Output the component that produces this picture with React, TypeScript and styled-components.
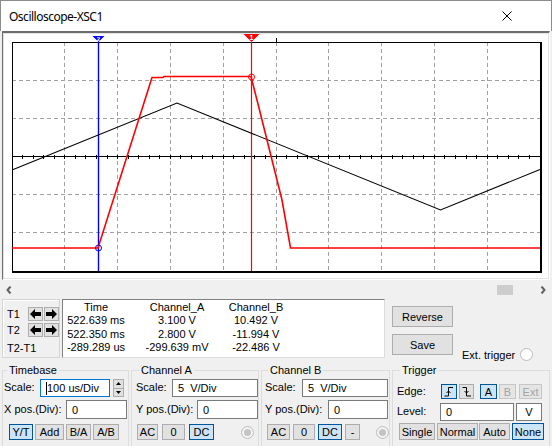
import React from 'react'
import styled, { createGlobalStyle } from 'styled-components'

const GlobalStyle = createGlobalStyle`
  html, body {
    margin: 0;
    padding: 0;
    background: #f0f0f0;
    overflow: hidden;
  }
  body {
    font-family: "Liberation Sans", Arial, sans-serif;
    font-size: 11px;
    color: #000;
  }
`

// plot area in page coordinates
const X0 = 12
const X1 = 540
const Y0 = 42
const Y1 = 271
const DX = (X1 - X0) / 10
const DY = (Y1 - Y0) / 6
const YC = (Y0 + Y1) / 2

const redTrace = [
  [12, 248], [98, 248], [152, 77.5], [163, 77.5], [164, 76.5], [251, 76.5],
  [259, 108], [282, 200], [290.5, 248], [540, 248],
]
const blackTrace = [[12, 170], [177, 103], [440.5, 210], [540, 169.5]]
const pts = (a: number[][]) => a.map((p) => p.join(',')).join(' ')

const Window = styled.div`
  width: 552px;
  height: 446px;
  overflow: hidden;
  background: #f0f0f0;
  display: flex;
  flex-direction: column;
  & > * {
    flex-shrink: 0;
  }
`

const TitleBar = styled.div`
  height: 31px;
  box-sizing: border-box;
  background: #fff;
  border: 1px solid #8c8c8c;
  border-bottom: 0;
  display: flex;
  align-items: center;
  justify-content: space-between;
  padding: 0 39px 0 8px;
  font-family: "Noto Sans", "Open Sans", sans-serif;
  font-size: 12px;
  letter-spacing: -0.5px;
  color: #000;
`

const ScopeFrame = styled.div`
  height: 249px;
  margin: 0 2px;
  box-sizing: border-box;
  background: #fff;
  border-top: 2px solid #6d6d6d;
  border-left: 1px solid #6d6d6d;
  border-right: 1px solid #fff;
  border-bottom: 1px solid #fff;
  padding: 1px;
  box-shadow: inset 1px 1px 0 #e3e3e3, inset -1px -1px 0 #e3e3e3;

  svg {
    display: block;
  }
`

const ScrollBar = styled.div`
  height: 19px;
  margin: 0 2px;
  padding: 0 4px;
  box-sizing: border-box;
  display: flex;
  align-items: center;
`

const Track = styled.div`
  flex: 1;
  align-self: stretch;
  display: flex;
  align-items: center;
  justify-content: flex-end;
`

const Thumb = styled.div`
  width: 16px;
  height: 10px;
  margin-right: 27px;
  background: #cdcdcd;
`

const ReadoutRow = styled.div`
  height: 62px;
  display: flex;
  align-items: flex-start;
  padding-left: 2px;
`

const CursorBox = styled.div`
  box-sizing: border-box;
  width: 58px;
  height: 59px;
  border: 1px solid #d4d4d4;
  box-shadow: inset 1px 1px 0 #fff;
  padding: 7px 0 0 4px;
  display: grid;
  grid-template-columns: 20px 15px 15px;
  grid-template-rows: 14px 14px 18px;
  column-gap: 1px;
  row-gap: 2px;
  align-items: center;
`

const WideCell = styled.span`
  grid-column: 1 / -1;
`

const ArrowBtn = styled.div`
  box-sizing: border-box;
  height: 14px;
  background: #e1e1e1;
  border: 1px solid #adadad;
  display: flex;
  align-items: center;
  justify-content: center;
`

const Readout = styled.div`
  box-sizing: border-box;
  width: 323px;
  height: 59px;
  margin-left: 2px;
  padding-top: 1px;
  background: #fff;
  border: 1px solid;
  border-color: #828282 #dcdcdc #dcdcdc #828282;
  display: grid;
  grid-template-columns: 66px 96px 62px;
  grid-auto-rows: 13.3px;
  line-height: 13.3px;
  text-align: center;
  white-space: pre;
`

const Side = styled.div`
  height: 100%;
  display: flex;
  margin-left: 7px;
`

const SideButtons = styled.div`
  display: flex;
  flex-direction: column;
  gap: 7px;
  padding-top: 7px;
`

const WideBtn = styled.button`
  box-sizing: border-box;
  width: 61px;
  height: 21px;
  padding: 0;
  font: 11px "Liberation Sans", Arial, sans-serif;
  color: #000;
  background: #e1e1e1;
  border: 1px solid #adadad;
`

const ExtTrigger = styled.div`
  align-self: flex-end;
  height: 13px;
  margin-left: 9px;
  display: flex;
  align-items: center;
  gap: 5px;
  white-space: nowrap;
`

const Radio = styled.span<{ $checked?: boolean; $white?: boolean }>`
  box-sizing: border-box;
  width: 13px;
  height: 13px;
  border-radius: 50%;
  border: 1px solid #bcbcbc;
  background: ${(p) => (p.$white ? '#fff' : '#f4f4f4')};
  display: inline-flex;
  align-items: center;
  justify-content: center;
  flex-shrink: 0;

  &::after {
    content: '';
    display: ${(p) => (p.$checked ? 'block' : 'none')};
    width: 7px;
    height: 7px;
    border-radius: 50%;
    background: #c4c4c4;
  }
`

const Controls = styled.div`
  display: flex;
  gap: 2px;
  padding-left: 2px;
  margin-top: 3px;
`

const Group = styled.fieldset<{ $w: number; $pad: number }>`
  box-sizing: border-box;
  width: ${(p) => p.$w}px;
  height: 92px;
  min-width: 0;
  margin: 0;
  padding: 0 0 0 ${(p) => p.$pad}px;
  border: 1px solid #dcdcdc;
  flex-shrink: 0;
`

const Legend = styled.legend`
  padding: 0 2px;
  margin-left: 3px;
  font-size: 11px;
  line-height: 13px;
`

const Row = styled.div<{ $h: number; $mt: number }>`
  display: flex;
  align-items: center;
  height: ${(p) => p.$h}px;
  margin-top: ${(p) => p.$mt}px;
`

const Label = styled.span<{ $w: number }>`
  width: ${(p) => p.$w}px;
  flex-shrink: 0;
  white-space: nowrap;
  margin-top: -2px;
`

const Field = styled.div<{ $w: number; $focus?: boolean; $center?: boolean; $ml?: number }>`
  box-sizing: border-box;
  width: ${(p) => p.$w}px;
  height: 100%;
  margin-left: ${(p) => p.$ml ?? 0}px;
  padding-left: ${(p) => (p.$center ? 0 : 5)}px;
  background: #fff;
  border: 1px solid ${(p) => (p.$focus ? '#0078d7' : '#7a7a7a')};
  display: flex;
  align-items: center;
  justify-content: ${(p) => (p.$center ? 'center' : 'flex-start')};
  white-space: pre;
  flex-shrink: 0;
`

const Caret = styled.span`
  width: 1px;
  height: 13px;
  background: #000;
`

const Spinner = styled.div`
  display: flex;
  flex-direction: column;
  height: 16px;
  margin-left: 3px;
  border: 1px solid #adadad;
  background: #e1e1e1;
`

const SpinHalf = styled.div<{ $top?: boolean }>`
  width: 9px;
  flex: 1;
  display: flex;
  align-items: center;
  justify-content: center;
  border-bottom: ${(p) => (p.$top ? '1px solid #adadad' : '0')};
`

const Btn = styled.button<{ $w: number; $active?: boolean; $off?: boolean; $ml?: number }>`
  box-sizing: border-box;
  width: ${(p) => p.$w}px;
  height: 100%;
  margin: 0 0 0 ${(p) => p.$ml ?? 0}px;
  padding: 0;
  font: 11px "Liberation Sans", Arial, sans-serif;
  color: ${(p) => (p.$off ? '#a3a3a3' : '#000')};
  background: ${(p) => (p.$active ? '#cce4f7' : p.$off ? '#e5e5e5' : '#e1e1e1')};
  border: 1px solid ${(p) => (p.$active ? '#005499' : p.$off ? '#c6c6c6' : '#adadad')};
  display: flex;
  align-items: center;
  justify-content: center;
  flex-shrink: 0;
`

const RadioSlot = styled.div<{ $ml: number }>`
  margin-left: ${(p) => p.$ml}px;
  display: flex;
`

const Arrow = ({ right }: { right?: boolean }) => (
  <svg width="11" height="10" viewBox="0 0 11 10">
    <path
      d="M0 5 L5 0 L5 3 L11 3 L11 7 L5 7 L5 10 Z"
      fill="#000"
      transform={right ? 'translate(11 0) scale(-1 1)' : undefined}
    />
  </svg>
)

const Chevron = ({ right }: { right?: boolean }) => (
  <svg width="6" height="8" viewBox="0 0 6 8">
    <polyline
      points={right ? '1.5,0.5 4.5,4 1.5,7.5' : '4.5,0.5 1.5,4 4.5,7.5'}
      fill="none"
      stroke="#606060"
      strokeWidth="2"
    />
  </svg>
)

const Tri = ({ down }: { down?: boolean }) => (
  <svg width="5" height="3" viewBox="0 0 5 3">
    <path d={down ? 'M0 0 H5 L2.5 3 Z' : 'M0 3 H5 L2.5 0 Z'} fill="#000" />
  </svg>
)

const EdgeIcon = ({ fall }: { fall?: boolean }) => (
  <svg width="10" height="11" viewBox="0 0 10 11">
    <g fill="none" stroke="#000" strokeWidth="1">
      <polyline points={fall ? '0.5,1.5 4.5,1.5 4.5,10 9,10' : '0.5,10 4.5,10 4.5,1.5 9,1.5'} />
      <polyline points={fall ? '2.5,5 4.5,7 6.5,5' : '2.5,7 4.5,5 6.5,7'} />
    </g>
  </svg>
)

const Scope = () => {
  const vLines = Array.from({ length: 9 }, (_, i) => X0 + (i + 1) * DX)
  const hLines = [1, 2, 4, 5].map((j) => Y0 + j * DY)
  const ticks = Array.from({ length: 49 }, (_, i) => X0 + ((i + 1) * DX) / 5)
  return (
    <svg width="544" height="244" viewBox="4 34 544 244">
      <g stroke="#a0a0a0" strokeDasharray="4 3" shapeRendering="crispEdges">
        {vLines.map((x) => (
          <line key={x} x1={x} y1={Y0} x2={x} y2={Y1} />
        ))}
        {hLines.map((y) => (
          <line key={y} x1={X0} y1={y} x2={X1} y2={y} />
        ))}
      </g>
      <g stroke="#000" shapeRendering="crispEdges" fill="none">
        <line x1={X0} y1={YC} x2={X1} y2={YC} />
        {ticks.map((x) => (
          <line key={x} x1={x} y1={YC - 2} x2={x} y2={YC + 2} />
        ))}
        <line x1={276.5} y1={38} x2={276.5} y2={Y0} />
        <rect x={X0 + 0.5} y={Y0 + 0.5} width={X1 - X0} height={Y1 - Y0} />
        <line x1={X1 + 1.5} y1={Y0} x2={X1 + 1.5} y2={Y1 + 2} />
        <line x1={X0} y1={Y1 + 1.5} x2={X1 + 2} y2={Y1 + 1.5} />
      </g>
      <line x1={98.5} y1={Y0} x2={98.5} y2={Y1} stroke="#0000ff" strokeWidth="1.4" />
      <line x1={251.5} y1={Y0} x2={251.5} y2={Y1} stroke="#ff0000" strokeWidth="1.2" />
      <polyline points={pts(blackTrace)} fill="none" stroke="#000" strokeWidth="1.1" />
      <polyline points={pts(redTrace)} fill="none" stroke="#ff0000" strokeWidth="1.6" />
      <circle cx={98.5} cy={248} r={3} fill="none" stroke="#0000ff" strokeWidth="1" />
      <circle cx={251.5} cy={77} r={3} fill="none" stroke="#ff0000" strokeWidth="1" />
      <polygon points="92.5,36 104.5,36 98.5,42" fill="#0000ff" />
      <text x={98.5} y={40.5} fontSize="6" fontWeight="bold" fill="#fff" textAnchor="middle" fontFamily="Liberation Sans, sans-serif">
        2
      </text>
      <polygon points="243.5,34 259.5,34 251.5,42" fill="#ff0000" />
      <text x={251.5} y={40} fontSize="7" fontWeight="bold" fill="#fff" textAnchor="middle" fontFamily="Liberation Sans, sans-serif">
        1
      </text>
    </svg>
  )
}

const readings = [
  ['Time', 'Channel_A', 'Channel_B'],
  ['522.639 ms', '3.100 V', '10.492 V'],
  ['522.350 ms', '2.800 V', '-11.994 V'],
  ['-289.289 us', '-299.639 mV', '-22.486 V'],
]

const App = () => {
  return (
    <Window>
      <GlobalStyle />
      <TitleBar>
        <span>Oscilloscope-XSC1</span>
        <svg width="10" height="10" viewBox="0 0 10 10">
          <path d="M0.5 0.5 L9.5 9.5 M9.5 0.5 L0.5 9.5" stroke="#000" strokeWidth="1" />
        </svg>
      </TitleBar>

      <ScopeFrame>
        <Scope />
      </ScopeFrame>

      <ScrollBar>
        <Chevron />
        <Track>
          <Thumb />
        </Track>
        <Chevron right />
      </ScrollBar>

      <ReadoutRow>
        <CursorBox>
          <span>T1</span>
          <ArrowBtn><Arrow /></ArrowBtn>
          <ArrowBtn><Arrow right /></ArrowBtn>
          <span>T2</span>
          <ArrowBtn><Arrow /></ArrowBtn>
          <ArrowBtn><Arrow right /></ArrowBtn>
          <WideCell>T2-T1</WideCell>
        </CursorBox>

        <Readout>
          {readings.flat().map((t, i) => (
            <span key={i}>{t}</span>
          ))}
        </Readout>

        <Side>
          <SideButtons>
            <WideBtn>Reverse</WideBtn>
            <WideBtn>Save</WideBtn>
          </SideButtons>
          <ExtTrigger>
            <span>Ext. trigger</span>
            <Radio $white />
          </ExtTrigger>
        </Side>
      </ReadoutRow>

      <Controls>
        <Group $w={127} $pad={1}>
          <Legend>Timebase</Legend>
          <Row $h={18} $mt={2}>
            <Label $w={36}>Scale:</Label>
            <Field $w={70} $focus>
              <Caret />
              100 us/Div
            </Field>
            <Spinner>
              <SpinHalf $top><Tri /></SpinHalf>
              <SpinHalf><Tri down /></SpinHalf>
            </Spinner>
          </Row>
          <Row $h={19} $mt={3}>
            <Label $w={62}>X pos.(Div):</Label>
            <Field $w={61}>0</Field>
          </Row>
          <Row $h={16} $mt={5}>
            <Btn $w={24} $ml={5} $active>Y/T</Btn>
            <Btn $w={29} $ml={2}>Add</Btn>
            <Btn $w={25} $ml={2}>B/A</Btn>
            <Btn $w={26} $ml={2}>A/B</Btn>
          </Row>
        </Group>

        <Group $w={128} $pad={4}>
          <Legend>Channel A</Legend>
          <Row $h={18} $mt={2}>
            <Label $w={36}>Scale:</Label>
            <Field $w={86}>5  V/Div</Field>
          </Row>
          <Row $h={19} $mt={3}>
            <Label $w={61}>Y pos.(Div):</Label>
            <Field $w={61}>0</Field>
          </Row>
          <Row $h={16} $mt={5}>
            <Btn $w={21} $ml={1}>AC</Btn>
            <Btn $w={23} $ml={4}>0</Btn>
            <Btn $w={25} $ml={4} $active>DC</Btn>
            <RadioSlot $ml={27}>
              <Radio $checked />
            </RadioSlot>
          </Row>
        </Group>

        <Group $w={129} $pad={3}>
          <Legend>Channel B</Legend>
          <Row $h={18} $mt={2}>
            <Label $w={37}>Scale:</Label>
            <Field $w={86}>5  V/Div</Field>
          </Row>
          <Row $h={19} $mt={3}>
            <Label $w={63}>Y pos.(Div):</Label>
            <Field $w={60}>0</Field>
          </Row>
          <Row $h={16} $mt={5}>
            <Btn $w={23} $ml={2}>AC</Btn>
            <Btn $w={22} $ml={3}>0</Btn>
            <Btn $w={24} $ml={3} $active>DC</Btn>
            <Btn $w={15} $ml={3}>-</Btn>
            <RadioSlot $ml={16}>
              <Radio $checked />
            </RadioSlot>
          </Row>
        </Group>

        <Group $w={158} $pad={4}>
          <Legend>Trigger</Legend>
          <Row $h={15} $mt={7}>
            <Label $w={44}>Edge:</Label>
            <Btn $w={16} $active><EdgeIcon /></Btn>
            <Btn $w={15} $ml={2}><EdgeIcon fall /></Btn>
            <Btn $w={17} $ml={6} $active>A</Btn>
            <Btn $w={17} $ml={2} $off>B</Btn>
            <Btn $w={23} $ml={3} $off>Ext</Btn>
          </Row>
          <Row $h={18} $mt={4}>
            <Label $w={43}>Level:</Label>
            <Field $w={74}>0</Field>
            <Field $w={26} $ml={2} $center>V</Field>
          </Row>
          <Row $h={17} $mt={2}>
            <Btn $w={36} $ml={2}>Single</Btn>
            <Btn $w={41} $ml={2}>Normal</Btn>
            <Btn $w={31} $ml={1}>Auto</Btn>
            <Btn $w={32} $ml={2} $active>None</Btn>
          </Row>
        </Group>
      </Controls>
    </Window>
  )
}

export default App
